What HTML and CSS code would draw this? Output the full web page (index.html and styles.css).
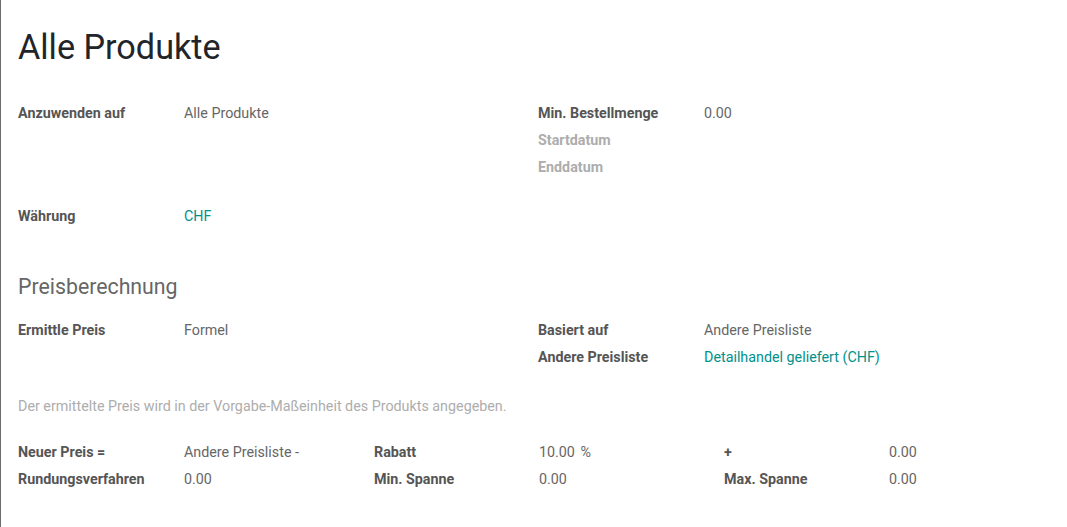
FILE: index.html
```html
<!DOCTYPE html>
<html lang="de">
<head>
<meta charset="utf-8">
<title>Alle Produkte</title>
<link rel="stylesheet" href="styles.css">
</head>
<body>
<div class="sheet">
  <h1 class="title">Alle Produkte</h1>

  <div class="group two">
    <div class="col">
      <div class="row"><span class="label">Anzuwenden auf</span><span class="value">Alle Produkte</span></div>
    </div>
    <div class="col">
      <div class="row"><span class="label">Min. Bestellmenge</span><span class="value">0.00</span></div>
      <div class="row"><span class="label muted">Startdatum</span><span class="value"></span></div>
      <div class="row"><span class="label muted">Enddatum</span><span class="value"></span></div>
    </div>
  </div>

  <div class="group currency">
    <div class="col">
      <div class="row"><span class="label">Währung</span><span class="value link">CHF</span></div>
    </div>
  </div>

  <h2 class="section">Preisberechnung</h2>

  <div class="group two tight">
    <div class="col">
      <div class="row"><span class="label">Ermittle Preis</span><span class="value">Formel</span></div>
    </div>
    <div class="col">
      <div class="row"><span class="label">Basiert auf</span><span class="value">Andere Preisliste</span></div>
      <div class="row"><span class="label">Andere Preisliste</span><span class="value link">Detailhandel geliefert (CHF)</span></div>
    </div>
  </div>

  <p class="help">Der ermittelte Preis wird in der Vorgabe-Maßeinheit des Produkts angegeben.</p>

  <div class="group three">
    <div class="col c1">
      <div class="row"><span class="label">Neuer Preis =</span><span class="value">Andere Preisliste -</span></div>
      <div class="row"><span class="label">Rundungsverfahren</span><span class="value">0.00</span></div>
    </div>
    <div class="col c2">
      <div class="row"><span class="label">Rabatt</span><span class="value">10.00 <span class="unit">%</span></span></div>
      <div class="row"><span class="label">Min. Spanne</span><span class="value">0.00</span></div>
    </div>
    <div class="col c3">
      <div class="row"><span class="label">+</span><span class="value">0.00</span></div>
      <div class="row"><span class="label">Max. Spanne</span><span class="value">0.00</span></div>
    </div>
  </div>
</div>
</body>
</html>
```

FILE: styles.css
```css
html, body {
  margin: 0;
  padding: 0;
  background: #fff;
}
body {
  font-family: Roboto, "Noto Sans", sans-serif;
  font-size: 14.3px;
  color: #666;
  min-height: 527px;
  border-left: 1px solid #6c6c6c;
  box-sizing: border-box;
}
.sheet {
  padding: 26px 18px 0 17px;
}
.title {
  margin: 0;
  font-size: 34.2px;
  line-height: 42px;
  font-weight: 400;
  color: #212529;
}
.group {
  display: flex;
}
.col {
  flex: none;
}
.two {
  margin-top: 32px;
}
.two .col:first-child {
  width: 520px;
}
.two .col:last-child {
  flex: 1;
}
.currency {
  margin-top: 22px;
}
.row {
  display: flex;
  height: 27px;
  line-height: 27px;
  white-space: nowrap;
}
.label {
  width: 166px;
  flex: none;
  font-weight: 700;
  color: #555;
}
.label.muted {
  color: #adadad;
}
.value {
  color: #666;
}
.link {
  color: #00918c;
}
.section {
  margin: 44px 0 0;
  font-size: 21.3px;
  line-height: 26px;
  font-weight: 400;
  color: #666;
}
.tight {
  margin-top: 17px;
}
.help {
  margin: 22px 0 0;
  line-height: 27px;
  color: #adadad;
}
.three {
  margin-top: 19px;
}
.c1 { width: 356px; }
.c2 { width: 350px; }
.c3 { flex: 1; }
.c2 .label, .c3 .label { width: 165px; }
.unit {
  margin-left: 2px;
}
```
